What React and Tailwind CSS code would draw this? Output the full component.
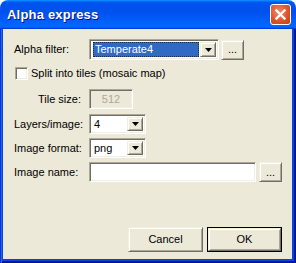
import React from "react";

const sunken =
  "border border-t-[#ACA899] border-l-[#ACA899] border-r-white border-b-white shadow-[inset_1px_1px_#716F64,inset_-1px_-1px_#F1EFE2]";
const raised =
  "border border-t-[#F1EFE2] border-l-[#F1EFE2] border-r-[#716F64] border-b-[#716F64] shadow-[inset_1px_1px_white,inset_-1px_-1px_#ACA899] bg-[#ECE9D8]";

function Arrow() {
  return (
    <div className={`w-[16px] h-full flex items-center justify-center ${raised}`}>
      <svg width="7" height="4" viewBox="0 0 7 4">
        <path d="M0 0h7L3.5 4z" fill="black" />
      </svg>
    </div>
  );
}

function Combo({ w, value, selected }) {
  return (
    <div className={`${w} h-[21px] bg-white flex p-[2px] ${sunken}`}>
      <div className="flex-1 flex items-center pl-[1px] pr-[1px]">
        {selected ? (
          <div className="w-full h-[15px] bg-[#316AC5] text-white flex items-center pl-[2px] outline outline-1 outline-dotted outline-[#2b2b2b] -outline-offset-1">
            {value}
          </div>
        ) : (
          <span className="pl-[1px]">{value}</span>
        )}
      </div>
      <Arrow />
    </div>
  );
}

function Btn({ w, h, children, def }) {
  if (def) {
    return (
      <div className={`${w} ${h} border border-black`}>
        <div className={`w-full h-full flex items-center justify-center ${raised}`}>{children}</div>
      </div>
    );
  }
  return <div className={`${w} ${h} flex items-center justify-center ${raised}`}>{children}</div>;
}

export default function App() {
  return (
    <div className="w-[296px] h-[263px] flex flex-col font-['Liberation_Sans',Arial,sans-serif] text-[11px] text-black bg-white">
      <div className="h-[29px] shrink-0 rounded-t-[8px] bg-[linear-gradient(180deg,#0997ff,#0053ee_8%,#0050ee_40%,#06f_88%,#06f_93%,#005bff_95%,#003dd7_96%,#003dd7)] flex items-center justify-between pl-[7px] pr-[5px]">
        <span className="text-white font-bold text-[13px] [text-shadow:1px_1px_#0f1089] tracking-[0.2px]">Alpha express</span>
        <div className="w-[21px] h-[21px] rounded-[3px] border border-white bg-[radial-gradient(circle_at_40%_35%,#f08a6a,#e0542c_55%,#c63a12)] flex items-center justify-center">
          <svg width="11" height="11" viewBox="0 0 11 11">
            <path d="M1.5 1.5l8 8M9.5 1.5l-8 8" stroke="white" strokeWidth="2.4" strokeLinecap="square" />
          </svg>
        </div>
      </div>
      <div className="flex-1 flex flex-col bg-[#0845DD] pl-[3px] pr-[4px] pb-[4px] shadow-[inset_1px_0_#0831d9,inset_2px_0_#166aee,inset_-1px_-1px_#00138c,inset_-2px_-2px_#001ea0]">
        <div className="flex-1 bg-[#ECE9D8] flex flex-col pl-[11px] pr-[10px] pt-[10px]">
          <div className="flex items-center h-[21px]">
            <span className="w-[75px]">Alpha filter:</span>
            <Combo w="w-[130px]" value="Temperate4" selected />
            <div className="ml-[2px]">
              <Btn w="w-[23px]" h="h-[20px]">...</Btn>
            </div>
          </div>
          <div className="flex items-center h-[13px] mt-[7px] pl-[1px]">
            <div className={`w-[13px] h-[13px] bg-white ${sunken}`} />
            <span className="ml-[3px]">Split into tiles (mosaic map)</span>
          </div>
          <div className="flex items-center h-[20px] mt-[9px]">
            <span className="w-[75px] pl-[24px]">Tile size:</span>
            <div className={`w-[44px] h-[20px] bg-[#ECE9D8] flex items-center justify-center text-[#ACA899] ${sunken}`}>512</div>
          </div>
          <div className="flex items-center h-[20px] mt-[5px]">
            <span className="w-[75px]">Layers/image:</span>
            <Combo w="w-[57px] !h-[20px]" value="4" />
          </div>
          <div className="flex items-center h-[20px] mt-[4px]">
            <span className="w-[75px]">Image format:</span>
            <Combo w="w-[57px] !h-[20px]" value="png" />
          </div>
          <div className="flex items-center h-[20px] mt-[4px]">
            <span className="w-[75px]">Image name:</span>
            <div className={`w-[168px] h-[20px] bg-white ${sunken}`} />
            <div className="ml-[3px]">
              <Btn w="w-[23px]" h="h-[20px]">...</Btn>
            </div>
          </div>
          <div className="flex justify-end gap-[4px] mt-[45px]">
            <Btn w="w-[75px]" h="h-[25px]">Cancel</Btn>
            <Btn w="w-[75px]" h="h-[25px]" def>OK</Btn>
          </div>
        </div>
      </div>
    </div>
  );
}
